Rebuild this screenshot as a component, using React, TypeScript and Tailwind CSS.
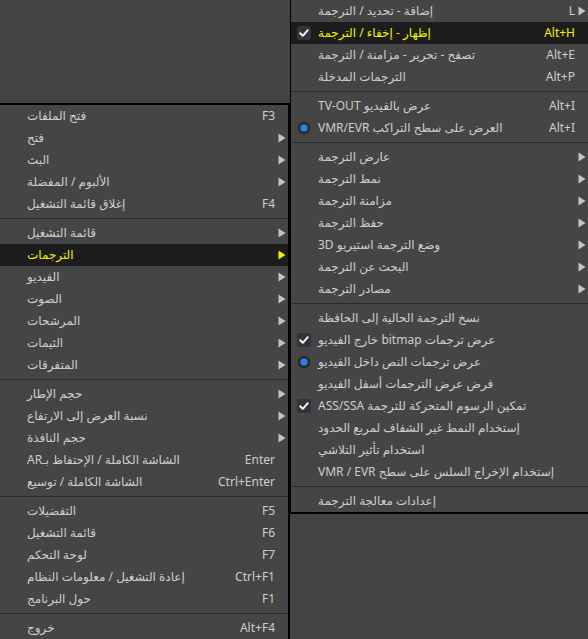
import React from 'react';

type Item =
    | { sep: true }
    | {
          sep?: false;
          label: string;
          shortcut?: string;
          sub?: boolean;
          mark?: 'check' | 'radio';
          active?: boolean;
      };

const leftMenu: Item[] = [
    { label: 'فتح الملفات', shortcut: 'F3' },
    { label: 'فتح', sub: true },
    { label: 'البث', sub: true },
    { label: 'الألبوم / المفضلة', sub: true },
    { label: 'إغلاق قائمة التشغيل', shortcut: 'F4' },
    { sep: true },
    { label: 'قائمة التشغيل', sub: true },
    { label: 'الترجمات', sub: true, active: true },
    { label: 'الفيديو', sub: true },
    { label: 'الصوت', sub: true },
    { label: 'المرشحات', sub: true },
    { label: 'الثيمات', sub: true },
    { label: 'المتفرقات', sub: true },
    { sep: true },
    { label: 'حجم الإطار', sub: true },
    { label: 'نسبة العرض إلى الارتفاع', sub: true },
    { label: 'حجم النافذة', sub: true },
    { label: 'الشاشة الكاملة / الإحتفاظ بـAR', shortcut: 'Enter' },
    { label: 'الشاشة الكاملة / توسيع', shortcut: 'Ctrl+Enter' },
    { sep: true },
    { label: 'التفضيلات', shortcut: 'F5' },
    { label: 'قائمة التشغيل', shortcut: 'F6' },
    { label: 'لوحة التحكم', shortcut: 'F7' },
    { label: 'إعادة التشغيل / معلومات النظام', shortcut: 'Ctrl+F1' },
    { label: 'حول البرنامج', shortcut: 'F1' },
    { sep: true },
    { label: 'خروج', shortcut: 'Alt+F4' },
];

const subtitleMenu: Item[] = [
    { label: 'إضافة - تحديد / الترجمة', shortcut: 'L', sub: true },
    { label: 'إظهار - إخفاء / الترجمة', shortcut: 'Alt+H', mark: 'check', active: true },
    { label: 'تصفح - تحرير - مزامنة / الترجمة', shortcut: 'Alt+E' },
    { label: 'الترجمات المدخلة', shortcut: 'Alt+P' },
    { sep: true },
    { label: 'عرض بالفيديو TV-OUT', shortcut: 'Alt+I' },
    { label: 'العرض على سطح التراكب VMR/EVR', shortcut: 'Alt+I', mark: 'radio' },
    { sep: true },
    { label: 'عارض الترجمة', sub: true },
    { label: 'نمط الترجمة', sub: true },
    { label: 'مزامنة الترجمة', sub: true },
    { label: 'حفظ الترجمة', sub: true },
    { label: 'وضع الترجمة استيريو 3D', sub: true },
    { label: 'البحث عن الترجمة', sub: true },
    { label: 'مصادر الترجمة', sub: true },
    { sep: true },
    { label: 'نسخ الترجمة الحالية إلى الحافظة' },
    { label: 'عرض ترجمات bitmap خارج الفيديو', mark: 'check' },
    { label: 'عرض ترجمات النص داخل الفيديو', mark: 'radio' },
    { label: 'فرض عرض الترجمات أسفل الفيديو' },
    { label: 'تمكين الرسوم المتحركة للترجمة ASS/SSA', mark: 'check' },
    { label: 'إستخدام النمط غير الشفاف لمربع الحدود' },
    { label: 'استخدام تأثير التلاشي' },
    { label: 'إستخدام الإخراج السلس على سطح VMR / EVR' },
    { sep: true },
    { label: 'إعدادات معالجة الترجمة' },
];

const CheckMark = () => (
    <svg width="14" height="14" viewBox="0 0 14 14">
        <rect x="0" y="0" width="14" height="14" rx="3" fill="#33333c" />
        <path d="M3.2 7.2 L5.8 9.8 L10.8 4.2" fill="none" stroke="#f2f2f2" strokeWidth="2" strokeLinecap="round" strokeLinejoin="round" />
    </svg>
);

const RadioMark = () => (
    <svg width="14" height="14" viewBox="0 0 14 14">
        <circle cx="7" cy="7" r="6.5" fill="#2c2c2c" />
        <circle cx="7" cy="7" r="3.6" fill="#2d7cf6" />
    </svg>
);

const Arrow = ({ active }: { active?: boolean }) => (
    <svg width="8" height="10" viewBox="0 0 8 10">
        <path d="M0.5 0.5 L7.5 5 L0.5 9.5 Z" fill={active ? '#f2f200' : '#c4c4c4'} />
    </svg>
);

const MenuRows = ({ items }: { items: Item[] }) => (
    <>
        {items.map((item, i) => {
            if (item.sep) {
                return (
                    <div key={i} className="h-[7px] flex flex-col justify-center">
                        <div className="h-px bg-[#2c2c2c]" />
                    </div>
                );
            }
            const color = item.active ? 'text-[#f2f200]' : 'text-[#cdcdcd]';
            return (
                <div
                    key={i}
                    className={`relative h-[22px] flex items-center pl-[27px] pr-[2px] ${item.active ? 'bg-[#1c1c1c]' : ''} ${color}`}
                >
                    {item.mark && (
                        <span className="absolute left-[6px] top-[4px] flex">
                            {item.mark === 'check' ? <CheckMark /> : <RadioMark />}
                        </span>
                    )}
                    <div className="flex-1 min-w-0 flex">
                        <span dir="rtl" className="whitespace-nowrap">
                            {item.label}
                        </span>
                    </div>
                    {item.shortcut && <span className="whitespace-nowrap">{item.shortcut}</span>}
                    <span className="w-[11px] flex justify-end items-center">
                        {item.sub && <Arrow active={item.active} />}
                    </span>
                </div>
            );
        })}
    </>
);

export default function App() {
    return (
        <div
            className="w-[588px] h-[639px] overflow-hidden bg-[#434343] flex items-start text-[12px] leading-none"
            style={{ fontFamily: '"Noto Sans", "DejaVu Sans", sans-serif' }}
        >
            <div className="w-[290px] shrink-0 pt-[103px]">
                <div className="bg-[#454545] border-t-2 border-r-2 border-black">
                    <MenuRows items={leftMenu} />
                </div>
            </div>
            <div className="w-[299px] shrink-0 bg-[#454545] border-l border-r border-b-2 border-black">
                <MenuRows items={subtitleMenu} />
            </div>
        </div>
    );
}
